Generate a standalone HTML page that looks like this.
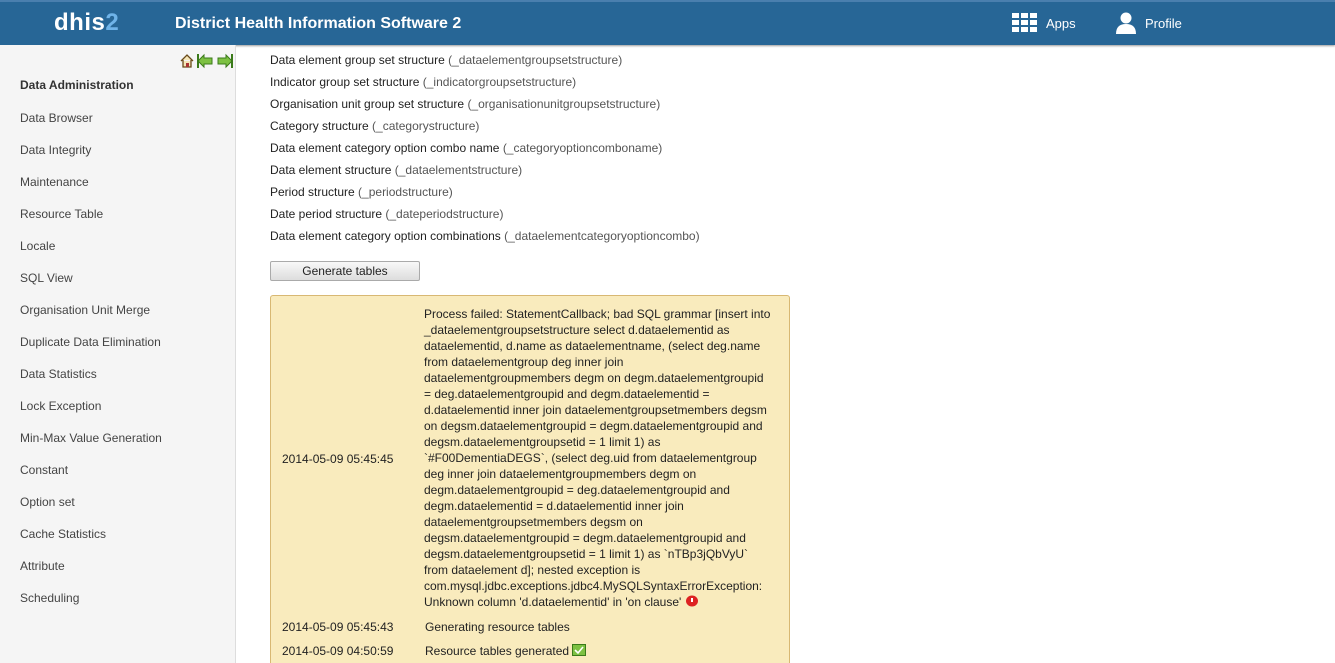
<!DOCTYPE html>
<html style="width:1335px;height:663px;overflow:hidden"><head><meta charset="utf-8"><style>
*{margin:0;padding:0;box-sizing:border-box}
body{width:1335px;height:663px;overflow:hidden;font-family:"Liberation Sans",Arial,sans-serif;font-size:12px;color:#333;background:#fff;position:relative}
#hdr{position:absolute;left:0;top:0;width:1335px;height:45px;background:#276696;border-top:2px solid #4a7fae;box-shadow:0 1px 2px #999}
#logo{position:absolute;left:54px;top:7px;font-size:24px;font-weight:bold;color:#fff;letter-spacing:0.5px}
#logo span{color:#6fb3e8}
#title{position:absolute;left:175px;top:13px;font-size:16px;font-weight:bold;color:#fff}
.hl{position:absolute;top:14px;color:#fff;font-size:13px}
#side{position:absolute;left:0;top:45px;width:236px;height:618px;background:#f5f5f5;border-right:1px solid #ddd}
#side div{position:absolute;left:20px;font-size:12px;color:#444}
#main div.l{position:absolute;left:270px;font-size:12px;color:#222}
#main div.l span{color:#555}
#btn{position:absolute;left:270px;top:261px;width:150px;height:20px;border:1px solid #aaa;border-radius:2px;background:linear-gradient(#f8f8f8,#ddd);text-align:center;line-height:18px;font-size:12px;color:#222}
#box{position:absolute;left:270px;top:295px;width:520px;height:380px;background:#f9ebbd;border:1px solid #d8b873;border-radius:3px}
#msg{position:absolute;left:153px;top:10px;width:360px;line-height:16px;font-size:12px;color:#222}
.d{position:absolute;left:11px;font-size:12px;color:#222}
</style></head><body>
<div id="hdr">
<div id="logo">dhis<span>2</span></div>
<div id="title">District Health Information Software 2</div>
<svg style="position:absolute;left:1012px;top:11px" width="25" height="20"><g fill="#fff"><rect x="0" y="0" width="7" height="5"/><rect x="9" y="0" width="7" height="5"/><rect x="18" y="0" width="7" height="5"/><rect x="0" y="7" width="7" height="5"/><rect x="9" y="7" width="7" height="5"/><rect x="18" y="7" width="7" height="5"/><rect x="0" y="14" width="7" height="5"/><rect x="9" y="14" width="7" height="5"/><rect x="18" y="14" width="7" height="5"/></g></svg>
<div class="hl" style="left:1046px">Apps</div>
<svg style="position:absolute;left:1115px;top:10px" width="22" height="24"><circle cx="11" cy="6" r="5.5" fill="#fff"/><path d="M1 22 Q1 12 11 12 Q21 12 21 22 Z" fill="#fff"/></svg>
<div class="hl" style="left:1145px">Profile</div>
</div>
<div id="side">
<svg style="position:absolute;left:179px;top:8px" width="55" height="17"><path d="M2 8 L8 2 L14 8 M4 7 V14 H12 V7" fill="#f5e6b8" stroke="#6a4a1a" stroke-width="1.3"/><rect x="7" y="10" width="3" height="4" fill="#a33"/><path d="M19 8 L25 2 V5 H33 V11 H25 V14 Z" fill="#7dc142" stroke="#3a7a1a"/><rect x="18" y="1" width="2" height="14" fill="#3a7a1a"/><path d="M53 8 L47 2 V5 H39 V11 H47 V14 Z" fill="#7dc142" stroke="#3a7a1a"/><rect x="52" y="1" width="2" height="14" fill="#3a7a1a"/></svg>
<div style="top:33px;font-weight:bold;color:#333">Data Administration</div>
<div style="top:66px">Data Browser</div>
<div style="top:98px">Data Integrity</div>
<div style="top:130px">Maintenance</div>
<div style="top:162px">Resource Table</div>
<div style="top:194px">Locale</div>
<div style="top:226px">SQL View</div>
<div style="top:258px">Organisation Unit Merge</div>
<div style="top:290px">Duplicate Data Elimination</div>
<div style="top:322px">Data Statistics</div>
<div style="top:354px">Lock Exception</div>
<div style="top:386px">Min-Max Value Generation</div>
<div style="top:418px">Constant</div>
<div style="top:450px">Option set</div>
<div style="top:482px">Cache Statistics</div>
<div style="top:514px">Attribute</div>
<div style="top:546px">Scheduling</div>
</div>
<div id="main">
<div class="l" style="top:53px">Data element group set structure <span>(_dataelementgroupsetstructure)</span></div>
<div class="l" style="top:75px">Indicator group set structure <span>(_indicatorgroupsetstructure)</span></div>
<div class="l" style="top:97px">Organisation unit group set structure <span>(_organisationunitgroupsetstructure)</span></div>
<div class="l" style="top:119px">Category structure <span>(_categorystructure)</span></div>
<div class="l" style="top:141px">Data element category option combo name <span>(_categoryoptioncomboname)</span></div>
<div class="l" style="top:163px">Data element structure <span>(_dataelementstructure)</span></div>
<div class="l" style="top:185px">Period structure <span>(_periodstructure)</span></div>
<div class="l" style="top:207px">Date period structure <span>(_dateperiodstructure)</span></div>
<div class="l" style="top:229px">Data element category option combinations <span>(_dataelementcategoryoptioncombo)</span></div>
</div>
<div id="btn">Generate tables</div>
<div id="box">
<div class="d" style="top:156px">2014-05-09 05:45:45</div>
<div id="msg">Process failed: StatementCallback; bad SQL grammar [insert into<br>_dataelementgroupsetstructure select d.dataelementid as<br>dataelementid, d.name as dataelementname, (select deg.name<br>from dataelementgroup deg inner join<br>dataelementgroupmembers degm on degm.dataelementgroupid<br>= deg.dataelementgroupid and degm.dataelementid =<br>d.dataelementid inner join dataelementgroupsetmembers degsm<br>on degsm.dataelementgroupid = degm.dataelementgroupid and<br>degsm.dataelementgroupsetid = 1 limit 1) as<br>`#F00DementiaDEGS`, (select deg.uid from dataelementgroup<br>deg inner join dataelementgroupmembers degm on<br>degm.dataelementgroupid = deg.dataelementgroupid and<br>degm.dataelementid = d.dataelementid inner join<br>dataelementgroupsetmembers degsm on<br>degsm.dataelementgroupid = degm.dataelementgroupid and<br>degsm.dataelementgroupsetid = 1 limit 1) as `nTBp3jQbVyU`<br>from dataelement d]; nested exception is<br>com.mysql.jdbc.exceptions.jdbc4.MySQLSyntaxErrorException:<br>Unknown column 'd.dataelementid' in 'on clause' <svg width="14" height="12" style="vertical-align:-1px"><ellipse cx="7" cy="6" rx="6" ry="5.5" fill="#d22"/><rect x="6" y="3" width="2" height="4" fill="#fff"/></svg></div>
<div class="d" style="top:324px">2014-05-09 05:45:43</div>
<div class="d" style="left:154px;top:324px">Generating resource tables</div>
<div class="d" style="top:348px">2014-05-09 04:50:59</div>
<div class="d" style="left:154px;top:348px">Resource tables generated <svg width="14" height="12" style="vertical-align:-1px"><rect x="0.5" y="0.5" width="13" height="11" fill="#7dc142" stroke="#3a7a1a"/><path d="M3 6 L6 9 L11 3" stroke="#fff" stroke-width="1.6" fill="none"/></svg></div>
</div>
</body></html>
